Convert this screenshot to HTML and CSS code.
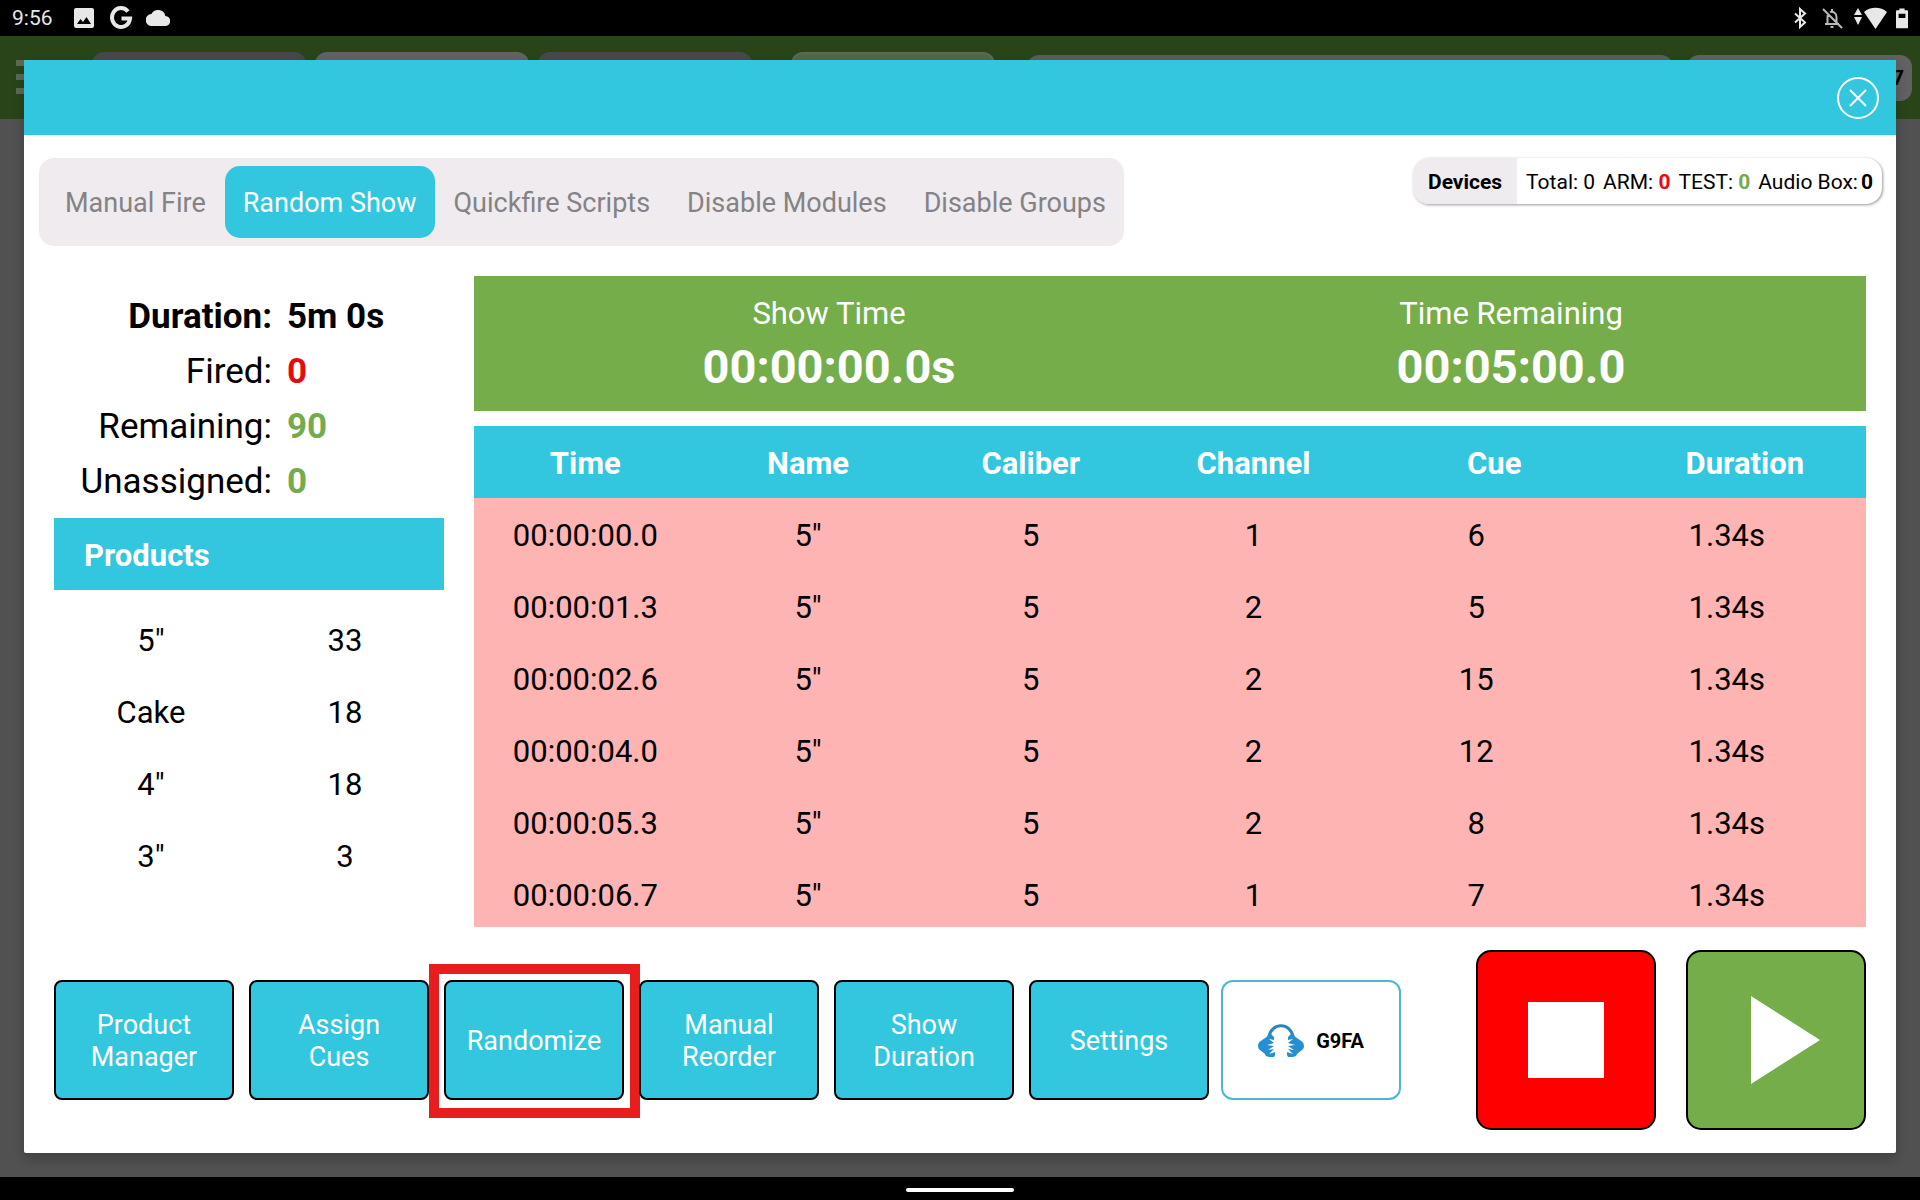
FILE: index.html
```html
<!DOCTYPE html>
<html lang="en">
<head>
    <meta charset="UTF-8">
    <meta name="viewport" content="width=device-width, initial-scale=1.0">
    <title>Random Show</title>
    <link rel="stylesheet" href="styles.css">
</head>
<body>

<!-- System status bar -->
<header class="status-bar">
    <div class="status-left">
        <span class="clock">9:56</span>
        <svg class="status-icon" viewBox="0 0 24 24"><path fill-rule="evenodd" d="M4 2h16a2 2 0 0 1 2 2v16a2 2 0 0 1-2 2H4a2 2 0 0 1-2-2V4a2 2 0 0 1 2-2zM5 18h14l-4.500-7-3.500 5-2.500-3z"/></svg>
        <svg class="status-icon" viewBox="0 0 24 24"><path class="line-g" d="M19 5.500A9 9.500 0 1 0 21 12.500H12.500"/></svg>
        <svg class="status-icon" viewBox="0 0 24 24"><path d="M19.400 10A7.500 7.500 0 0 0 5.400 8 6 6 0 0 0 6 20h13a5 5 0 0 0 .4-10z"/></svg>
    </div>
    <div class="status-right">
        <svg class="status-icon" viewBox="0 0 24 24"><path class="line" d="M8 7.500l10 9-5 4.500V3l5 4.500-10 9"/></svg>
        <svg class="status-icon dim" viewBox="0 0 24 24"><path class="line" d="M3 3l19 19M5 18h14M7.500 18v-7a5 5 0 0 1 1-3.500M10 6a5 5 0 0 1 6.500 5v5M12 3v3M10.500 21h3"/></svg>
        <svg class="wifi-icon" viewBox="0 0 34 24"><path d="M5 2l4 7H1zM1 11h8l-4 8zM11 6a18 18 0 0 1 23 0L22.500 23z"/></svg>
        <svg class="battery-icon" viewBox="0 0 14 24"><path fill-rule="evenodd" d="M4 1h6v2h3a1 1 0 0 1 1 1v19a1 1 0 0 1-1 1H1a1 1 0 0 1-1-1V4a1 1 0 0 1 1-1h3zM3 7v5h8V7z"/></svg>
    </div>
</header>

<!-- App behind the dialog -->
<div class="app">
    <div class="app-bar">
        <div class="menu-icon"><span></span><span></span><span></span></div>
        <div class="pill pill-tab"></div>
        <div class="pill pill-tab pill-light"></div>
        <div class="pill pill-tab"></div>
        <div class="pill pill-mode"></div>
        <div class="pill pill-wide"></div>
        <div class="pill pill-count">7</div>
    </div>

    <section class="modal" role="dialog" aria-label="Random Show">
        <div class="modal-header">
            <button class="close-btn" aria-label="Close">
                <svg viewBox="0 0 42 42"><circle cx="21" cy="21" r="20"/><path d="M13 13l16 16M29 13L13 29"/></svg>
            </button>
        </div>

        <div class="top-row">
            <nav class="tabs">
                <button class="tab">Manual Fire</button>
                <button class="tab active">Random Show</button>
                <button class="tab">Quickfire Scripts</button>
                <button class="tab">Disable Modules</button>
                <button class="tab">Disable Groups</button>
            </nav>
            <div class="devices">
                <strong class="devices-label">Devices</strong>
                <div class="devices-counts">
                    <span>Total: 0</span>
                    <span>ARM: <b class="red">0</b></span>
                    <span>TEST: <b class="green">0</b></span>
                    <span class="audio">Audio Box:<b>0</b></span>
                </div>
            </div>
        </div>

        <main class="content">
            <aside class="sidebar">
                <dl class="stats">
                    <dt class="bold">Duration:</dt><dd>5m 0s</dd>
                    <dt>Fired:</dt><dd class="red">0</dd>
                    <dt>Remaining:</dt><dd class="green">90</dd>
                    <dt>Unassigned:</dt><dd class="green">0</dd>
                </dl>
                <h2 class="products-title">Products</h2>
                <table class="products">
                    <tr><td>5"</td><td>33</td></tr>
                    <tr><td>Cake</td><td>18</td></tr>
                    <tr><td>4"</td><td>18</td></tr>
                    <tr><td>3"</td><td>3</td></tr>
                </table>
            </aside>

            <div class="show">
                <div class="timers">
                    <div class="timer">
                        <span>Show Time</span>
                        <strong>00:00:00.0s</strong>
                    </div>
                    <div class="timer">
                        <span>Time Remaining</span>
                        <strong>00:05:00.0</strong>
                    </div>
                </div>
                <div class="cues-scroll">
                    <table class="cues">
                        <thead>
                            <tr><th>Time</th><th>Name</th><th>Caliber</th><th>Channel</th><th class="shifted">Cue</th><th class="shifted last">Duration</th></tr>
                        </thead>
                        <tbody>
                            <tr><td>00:00:00.0</td><td>5"</td><td>5</td><td>1</td><td>6</td><td>1.34s</td></tr>
                            <tr><td>00:00:01.3</td><td>5"</td><td>5</td><td>2</td><td>5</td><td>1.34s</td></tr>
                            <tr><td>00:00:02.6</td><td>5"</td><td>5</td><td>2</td><td>15</td><td>1.34s</td></tr>
                            <tr><td>00:00:04.0</td><td>5"</td><td>5</td><td>2</td><td>12</td><td>1.34s</td></tr>
                            <tr><td>00:00:05.3</td><td>5"</td><td>5</td><td>2</td><td>8</td><td>1.34s</td></tr>
                            <tr><td>00:00:06.7</td><td>5"</td><td>5</td><td>1</td><td>7</td><td>1.34s</td></tr>
                        </tbody>
                    </table>
                </div>
            </div>
        </main>

        <div class="actions">
            <button class="action-btn">Product<br>Manager</button>
            <button class="action-btn">Assign<br>Cues</button>
            <button class="action-btn highlighted">Randomize</button>
            <button class="action-btn">Manual<br>Reorder</button>
            <button class="action-btn">Show<br>Duration</button>
            <button class="action-btn">Settings</button>
            <button class="audio-btn">
                <svg class="audio-icon" viewBox="0 0 46 34">
                    <path class="band" d="M11 13C13-2 33-2 35 13"/>
                    <path d="M10 11C7 16 0 16 0 22c0 5 6 5 8 10l3 1h5l1-2v-3l-6 2 5-5-6 1 6-4-7-1 7-2-5-4 5 1v-3l-3-3z"/>
                    <path d="M36 11c3 5 10 5 10 11 0 5-6 5-8 10l-3 1h-5l-1-2v-3l6 2-5-5 6 1-6-4 7-1-7-2 5-4-5 1v-3l3-3z"/>
                </svg>
                G9FA
            </button>
            <button class="round-btn stop" aria-label="Stop"><svg viewBox="0 0 76 76"><path d="M0 0h76v76H0z"/></svg></button>
            <button class="round-btn play" aria-label="Play"><svg viewBox="0 0 76 88"><path d="M0 0l69 44L0 88z"/></svg></button>
        </div>
    </section>
</div>

<footer class="nav-bar"><span class="home-pill"></span></footer>

</body>
</html>
```
FILE: styles.css
```css
* {
    box-sizing: border-box;
}

body {
    margin: 0;
    min-height: 100vh;
    display: flex;
    flex-direction: column;
    font-family: Roboto, "Liberation Sans", sans-serif;
    background-color: #515151;
    color: #000;
}

button {
    font-family: inherit;
    cursor: pointer;
}

.red {
    color: #e50b0f;
}

.green {
    color: #74ab4d;
}

/* System bars */
.status-bar {
    height: 36px;
    padding: 0 12px;
    background-color: #000;
    color: #e8e8e8;
    display: flex;
    justify-content: space-between;
    align-items: center;
}

.status-left,
.status-right {
    display: flex;
    align-items: center;
}

.status-left {
    gap: 13px;
}

.status-right {
    gap: 9px;
}

.clock {
    font-size: 21px;
    line-height: 38px;
    margin-right: 6px;
}

.status-bar svg {
    fill: #e8e8e8;
    height: 24px;
}

.status-icon {
    width: 24px;
}

.status-bar .line,
.status-bar .line-g {
    fill: none;
    stroke: #e8e8e8;
    stroke-width: 2;
}

.status-bar .line-g {
    stroke-width: 4;
}

.status-bar .dim {
    opacity: 0.8;
}

.wifi-icon {
    width: 34px;
}

.battery-icon {
    width: 12px;
}

.nav-bar {
    height: 23px;
    background-color: #000;
    display: flex;
    justify-content: center;
    align-items: center;
}

.home-pill {
    width: 108px;
    height: 4px;
    margin-top: 2px;
    border-radius: 2px;
    background-color: #fff;
}

/* App behind the dialog */
.app {
    flex: 1;
    position: relative;
    padding: 24px;
    display: flex;
}

.app-bar {
    position: absolute;
    top: 0;
    left: 0;
    right: 0;
    height: 83px;
    padding: 16px 8px 0 16px;
    background-color: #2a4419;
    display: flex;
    align-items: flex-start;
}

.menu-icon {
    width: 66px;
    margin: 8px 10px 0 0;
    display: flex;
    flex-direction: column;
    gap: 8px;
}

.menu-icon span {
    height: 6px;
    background-color: #5d6856;
}

.pill {
    height: 46px;
    border-radius: 12px;
    background-color: #494749;
}

.pill-tab {
    width: 214px;
    margin-right: 9px;
}

.pill-light {
    background-color: #636163;
}

.pill-mode {
    width: 204px;
    margin: 0 32px 0 30px;
    background-color: #506847;
    border: 2px solid #5d6856;
}

.pill-wide {
    flex: 1;
    margin: 3px 14px 0 0;
    background-color: #5c5c5c;
}

.pill-count {
    width: 225px;
    margin-top: 3px;
    padding-right: 8px;
    background-color: #616161;
    text-align: right;
    font-size: 21px;
    font-weight: bold;
    line-height: 46px;
}

/* Dialog */
.modal {
    flex: 1;
    position: relative;
    border-radius: 2px;
    background-color: #fff;
    box-shadow: 0 6px 12px rgba(0, 0, 0, 0.2);
    display: flex;
    flex-direction: column;
}

.modal-header {
    height: 75px;
    padding-right: 17px;
    background-color: #32c6df;
    border-radius: 2px 2px 0 0;
    display: flex;
    justify-content: flex-end;
    align-items: center;
}

.close-btn {
    width: 42px;
    height: 42px;
    padding: 0;
    border: none;
    background: none;
}

.close-btn svg {
    display: block;
    fill: none;
    stroke: #fff;
    stroke-width: 2;
}

.top-row {
    padding: 23px 14px 30px 15px;
    display: flex;
    justify-content: space-between;
    align-items: flex-start;
}

.tabs {
    padding: 8px 0 8px 8px;
    border-radius: 15px;
    background-color: #efebee;
    display: flex;
    gap: 1px;
}

.tab {
    height: 72px;
    padding: 2px 18px 0;
    border: none;
    border-radius: 15px;
    background: none;
    color: #848285;
    font-size: 27px;
    white-space: nowrap;
}

.tab.active {
    background-color: #32c6df;
    color: #fff;
}

.devices {
    height: 46px;
    border-radius: 16px;
    overflow: hidden;
    box-shadow: 1px 1px 3px rgba(0, 0, 0, 0.4);
    font-size: 21px;
    line-height: 48px;
    white-space: nowrap;
    display: flex;
}

.devices-label {
    padding: 0 15px;
    background-color: #efebee;
}

.devices-counts {
    padding: 0 9px;
    display: flex;
    gap: 8px;
}

.audio b {
    margin-left: 3px;
}

/* Main content */
.content {
    flex: 1;
    padding: 0 30px;
    display: grid;
    grid-template-columns: 390px 1fr;
    gap: 30px;
}

.stats {
    margin: 0;
    padding: 13px 0 9px;
    display: grid;
    grid-template-columns: 218px 1fr;
    column-gap: 15px;
    font-size: 35px;
    line-height: 55px;
}

.stats dt {
    text-align: right;
}

.stats dd {
    margin: 0;
    font-weight: bold;
}

.stats .bold {
    font-weight: bold;
}

.products-title {
    height: 72px;
    margin: 0 0 14px;
    padding-left: 30px;
    background-color: #32c6df;
    color: #fff;
    font-size: 31px;
    line-height: 75px;
}

.products,
.cues {
    width: 100%;
    border-collapse: collapse;
    table-layout: fixed;
    font-size: 31px;
    text-align: center;
}

.products {
    width: 388px;
}

.products td,
.cues td,
.cues th {
    height: 72px;
    padding: 0;
}

.cues td,
.cues th {
    padding-top: 2px;
}

.show {
    display: flex;
    flex-direction: column;
    gap: 15px;
}

.timers {
    height: 135px;
    padding: 2px 14px 0;
    background-color: #74ad4a;
    color: #fff;
    display: flex;
}

.timer {
    flex: 1;
    display: flex;
    flex-direction: column;
    justify-content: center;
    align-items: center;
    gap: 8px;
    font-size: 31px;
    line-height: 36px;
}

.timer strong {
    font-size: 47px;
    line-height: 54px;
}

.cues-scroll {
    flex: 1 1 0;
    overflow: hidden;
    background-color: #ffb4b4;
}

.cues thead {
    background-color: #32c6df;
    color: #fff;
}

.cues th {
    width: 16%;
}

.cues .shifted {
    padding-left: 36px;
}

.cues .last {
    width: 20%;
}

/* Bottom buttons */
.actions {
    padding: 23px 30px;
    display: flex;
    align-items: center;
    gap: 15px;
}

.action-btn,
.audio-btn {
    position: relative;
    width: 180px;
    height: 120px;
    padding: 2px 0 0;
    border: 2px solid #000;
    border-radius: 8px;
    background-color: #32c6df;
    color: #fff;
    font-size: 27px;
    line-height: 32px;
}

.highlighted::after {
    content: "";
    position: absolute;
    inset: -18px -18px -20px -17px;
    border: 10px solid #e71d1e;
}

.audio-btn {
    margin-left: -3px;
    border-color: #4cb9cb;
    border-radius: 12px;
    background-color: #fff;
    color: #000;
    font-size: 20px;
    font-weight: bold;
    display: flex;
    justify-content: center;
    align-items: center;
    gap: 12px;
}

.audio-icon {
    width: 46px;
    height: 34px;
    fill: #2590cf;
}

.audio-icon .band {
    fill: none;
    stroke: #2a84bd;
    stroke-width: 3;
}

.round-btn {
    width: 180px;
    height: 180px;
    padding: 0;
    border: 2px solid #000;
    border-radius: 15px;
    display: flex;
    justify-content: center;
    align-items: center;
}

.round-btn svg {
    width: 76px;
    fill: #fff;
}

.stop {
    margin-left: auto;
    margin-right: 15px;
    background-color: #f00;
}

.play {
    background-color: #74ad4a;
}

.play svg {
    margin-left: 26px;
}
```
